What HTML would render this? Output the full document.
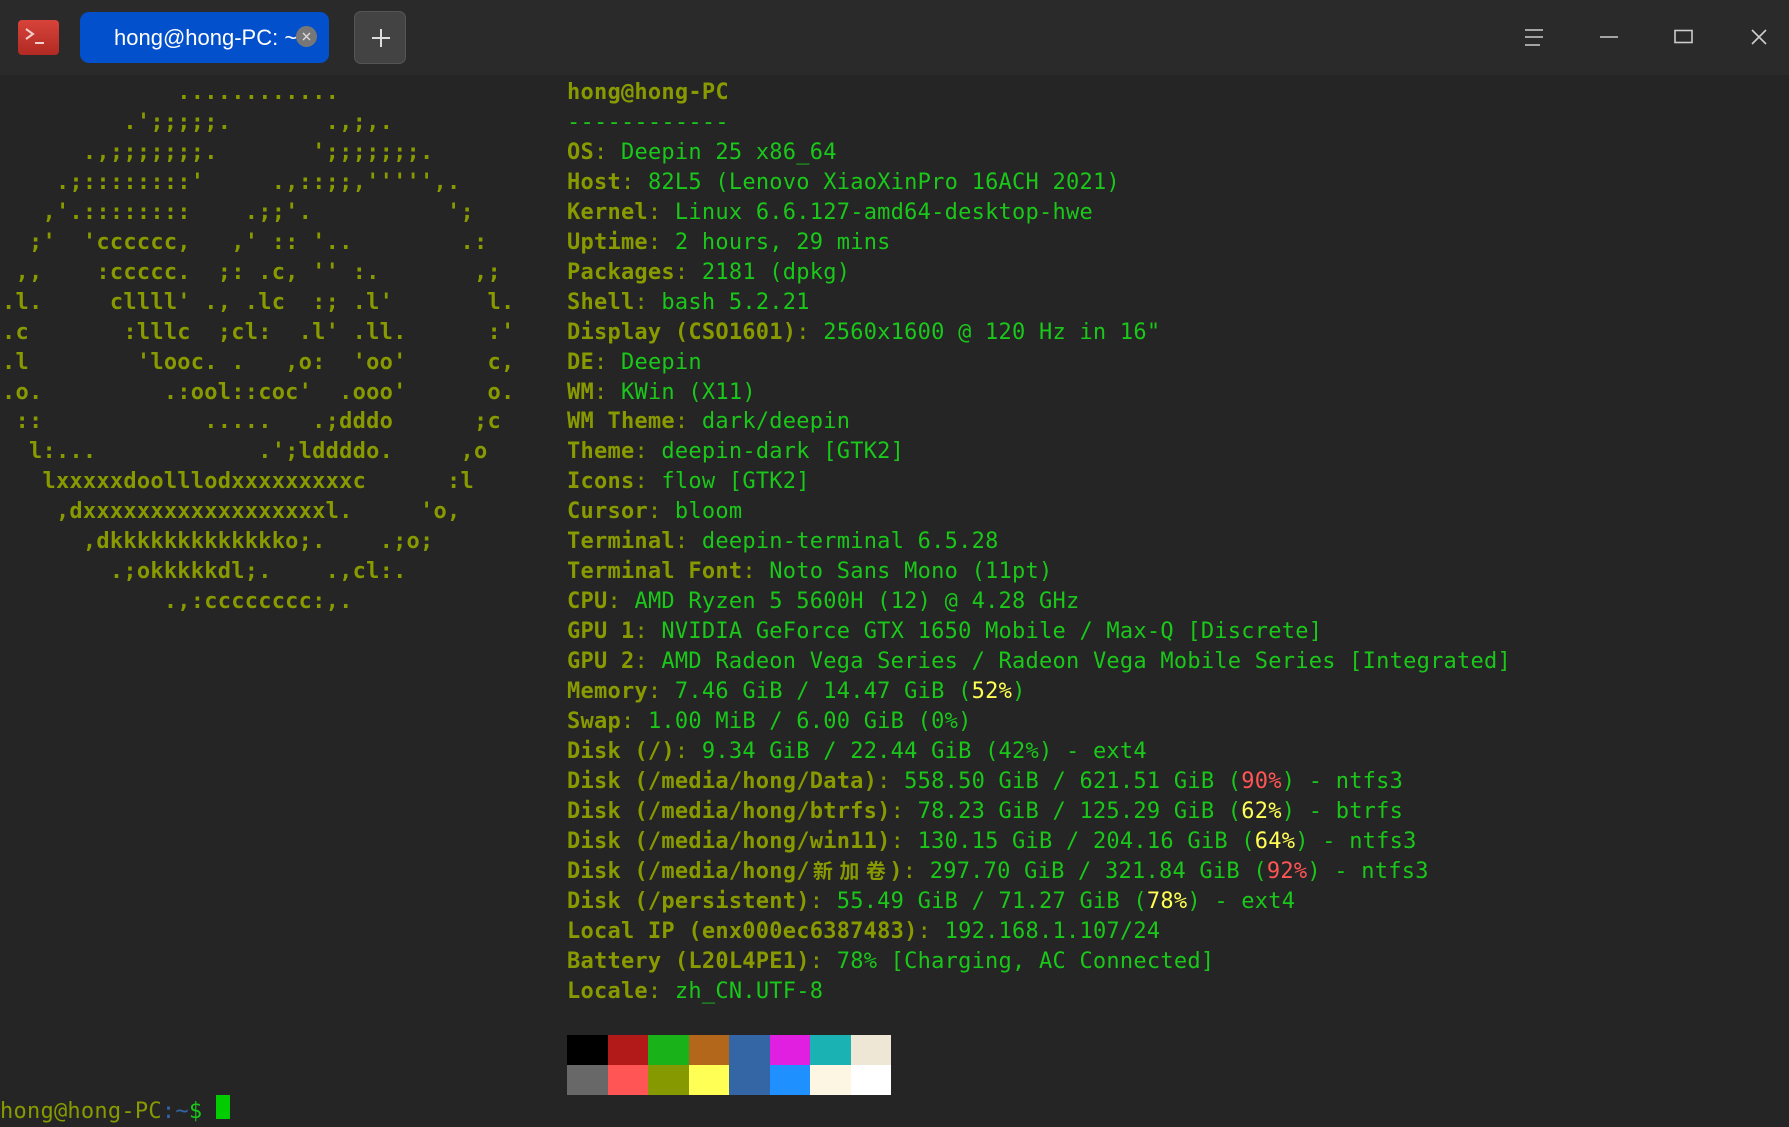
<!DOCTYPE html>
<html><head><meta charset="utf-8"><style>
html,body{margin:0;padding:0;width:1789px;height:1119px;overflow:hidden;background:#252525;}
.tb{position:absolute;left:0;top:0;width:1789px;height:75px;background:#2a2a2a;}
.icon{position:absolute;left:18px;top:20px;width:41px;height:35px;border-radius:4px;background:linear-gradient(#d8433a,#b02a23);}
.tab{position:absolute;left:80px;top:12px;width:249px;height:51px;border-radius:9px;background:#0350cc;color:#fff;font:22px "Liberation Sans","DejaVu Sans",sans-serif;}
.tab span{position:absolute;left:34px;top:13px;}
.tab .x{position:absolute;left:216px;top:14px;width:21px;height:21px;border-radius:50%;background:#777;}
.plus{position:absolute;left:354px;top:11px;width:52px;height:53px;border-radius:7px;background:#434343;border:1px solid #555;box-sizing:border-box;}
pre{margin:0;position:absolute;font-family:"DejaVu Sans Mono","Liberation Mono","Noto Sans CJK SC",monospace;font-size:22px;letter-spacing:0.24px;line-height:29.95px;white-space:pre;}
.a{left:2px;top:78px;color:#889a00;font-weight:bold;}
.i{left:567px;top:78px;color:#1ac81a;}
b{color:#889a00;}
.o{color:#889a00;}
.y{color:#ffff55;}
.r{color:#ff5555;}
.cj{display:inline-block;width:26.5px;font-family:"Noto Sans CJK SC",sans-serif;font-size:20px;text-align:center;line-height:20px;}
.pal{position:absolute;left:567px;top:1035px;}
.pal div{position:absolute;width:40.5px;height:30px;}
.pr{left:0;top:1097px;}
</style></head><body>
<div class="tb"></div>
<div class="icon"><svg width="41" height="35"><path d="M8 9l7 5-7 5" stroke="#f2d0cc" stroke-width="2" fill="none"/><path d="M17 23h9" stroke="#f2d0cc" stroke-width="2"/></svg></div>
<div class="tab"><span>hong@hong-PC: ~</span><div class="x"><svg width="21" height="21"><path d="M7 7l7 7M14 7l-7 7" stroke="#ddd" stroke-width="1.3"/></svg></div></div>
<div class="plus"><svg width="52" height="53"><path d="M26 17v18M17 26h18" stroke="#ddd" stroke-width="2"/></svg></div>
<svg style="position:absolute;left:1500px;top:0" width="289" height="75">
<path d="M25 30h18M25 37h18M25 45h15" stroke="#ccc" stroke-width="1.6"/>
<path d="M100 37h18" stroke="#ccc" stroke-width="1.6"/>
<rect x="175" y="30.5" width="17" height="12" fill="none" stroke="#ccc" stroke-width="1.6"/>
<path d="M252 30l14 14M266 30l-14 14" stroke="#ccc" stroke-width="1.6"/>
</svg>
<pre class="a">             ............
         .';;;;;.       .,;,.
      .,;;;;;;;.       ';;;;;;;.
    .;::::::::'     .,::;;,''''',.
   ,'.::::::::    .;;'.          ';
  ;'  'cccccc,   ,' :: '..        .:
 ,,    :ccccc.  ;: .c, '' :.       ,;
.l.     cllll' ., .lc  :; .l'       l.
.c       :lllc  ;cl:  .l' .ll.      :'
.l        'looc. .   ,o:  'oo'      c,
.o.         .:ool::coc'  .ooo'      o.
 ::            .....   .;dddo      ;c
  l:...            .';lddddo.     ,o
   lxxxxxdoolllodxxxxxxxxxc      :l
    ,dxxxxxxxxxxxxxxxxxxl.     'o,
      ,dkkkkkkkkkkkkko;.    .;o;
        .;okkkkkdl;.    .,cl:.
            .,:cccccccc:,.</pre>
<pre class="i"><b>hong@hong-PC</b>
------------
<b>OS</b><span class="o">:</span> Deepin 25 x86_64
<b>Host</b><span class="o">:</span> 82L5 (Lenovo XiaoXinPro 16ACH 2021)
<b>Kernel</b><span class="o">:</span> Linux 6.6.127-amd64-desktop-hwe
<b>Uptime</b><span class="o">:</span> 2 hours, 29 mins
<b>Packages</b><span class="o">:</span> 2181 (dpkg)
<b>Shell</b><span class="o">:</span> bash 5.2.21
<b>Display (CSO1601)</b><span class="o">:</span> 2560x1600 @ 120 Hz in 16"
<b>DE</b><span class="o">:</span> Deepin
<b>WM</b><span class="o">:</span> KWin (X11)
<b>WM Theme</b><span class="o">:</span> dark/deepin
<b>Theme</b><span class="o">:</span> deepin-dark [GTK2]
<b>Icons</b><span class="o">:</span> flow [GTK2]
<b>Cursor</b><span class="o">:</span> bloom
<b>Terminal</b><span class="o">:</span> deepin-terminal 6.5.28
<b>Terminal Font</b><span class="o">:</span> Noto Sans Mono (11pt)
<b>CPU</b><span class="o">:</span> AMD Ryzen 5 5600H (12) @ 4.28 GHz
<b>GPU 1</b><span class="o">:</span> NVIDIA GeForce GTX 1650 Mobile / Max-Q [Discrete]
<b>GPU 2</b><span class="o">:</span> AMD Radeon Vega Series / Radeon Vega Mobile Series [Integrated]
<b>Memory</b><span class="o">:</span> 7.46 GiB / 14.47 GiB (<span class="y">52%</span>)
<b>Swap</b><span class="o">:</span> 1.00 MiB / 6.00 GiB (0%)
<b>Disk (/)</b><span class="o">:</span> 9.34 GiB / 22.44 GiB (42%) - ext4
<b>Disk (/media/hong/Data)</b><span class="o">:</span> 558.50 GiB / 621.51 GiB (<span class="r">90%</span>) - ntfs3
<b>Disk (/media/hong/btrfs)</b><span class="o">:</span> 78.23 GiB / 125.29 GiB (<span class="y">62%</span>) - btrfs
<b>Disk (/media/hong/win11)</b><span class="o">:</span> 130.15 GiB / 204.16 GiB (<span class="y">64%</span>) - ntfs3
<b>Disk (/media/hong/<span class="cj">新</span><span class="cj">加</span><span class="cj">卷</span>)</b><span class="o">:</span> 297.70 GiB / 321.84 GiB (<span class="r">92%</span>) - ntfs3
<b>Disk (/persistent)</b><span class="o">:</span> 55.49 GiB / 71.27 GiB (<span class="y">78%</span>) - ext4
<b>Local IP (enx000ec6387483)</b><span class="o">:</span> 192.168.1.107/24
<b>Battery (L20L4PE1)</b><span class="o">:</span> 78% [Charging, AC Connected]
<b>Locale</b><span class="o">:</span> zh_CN.UTF-8</pre>
<div class="pal">
<div style="left:0;top:0;background:#000"></div>
<div style="left:40.5px;top:0;background:#b21a1a"></div>
<div style="left:81px;top:0;background:#19b219"></div>
<div style="left:121.5px;top:0;background:#b2671a"></div>
<div style="left:162px;top:0;background:#3465a4"></div>
<div style="left:202.5px;top:0;background:#e01fe0"></div>
<div style="left:243px;top:0;background:#1ab2b2"></div>
<div style="left:283.5px;top:0;background:#efe7d6"></div>
<div style="left:0;top:30px;background:#686868"></div>
<div style="left:40.5px;top:30px;background:#ff5555"></div>
<div style="left:81px;top:30px;background:#869900"></div>
<div style="left:121.5px;top:30px;background:#ffff55"></div>
<div style="left:162px;top:30px;background:#3465a4"></div>
<div style="left:202.5px;top:30px;background:#1e90ff"></div>
<div style="left:243px;top:30px;background:#fdf6e3"></div>
<div style="left:283.5px;top:30px;background:#fff"></div>
</div>
<pre class="pr"><span style="color:#889a00">hong@hong-PC</span><span style="color:#3465a4">:~</span><span style="color:#1ac81a">$ </span></pre>
<div style="position:absolute;left:216px;top:1095px;width:14px;height:24px;background:#00cc00"></div>
</body></html>
